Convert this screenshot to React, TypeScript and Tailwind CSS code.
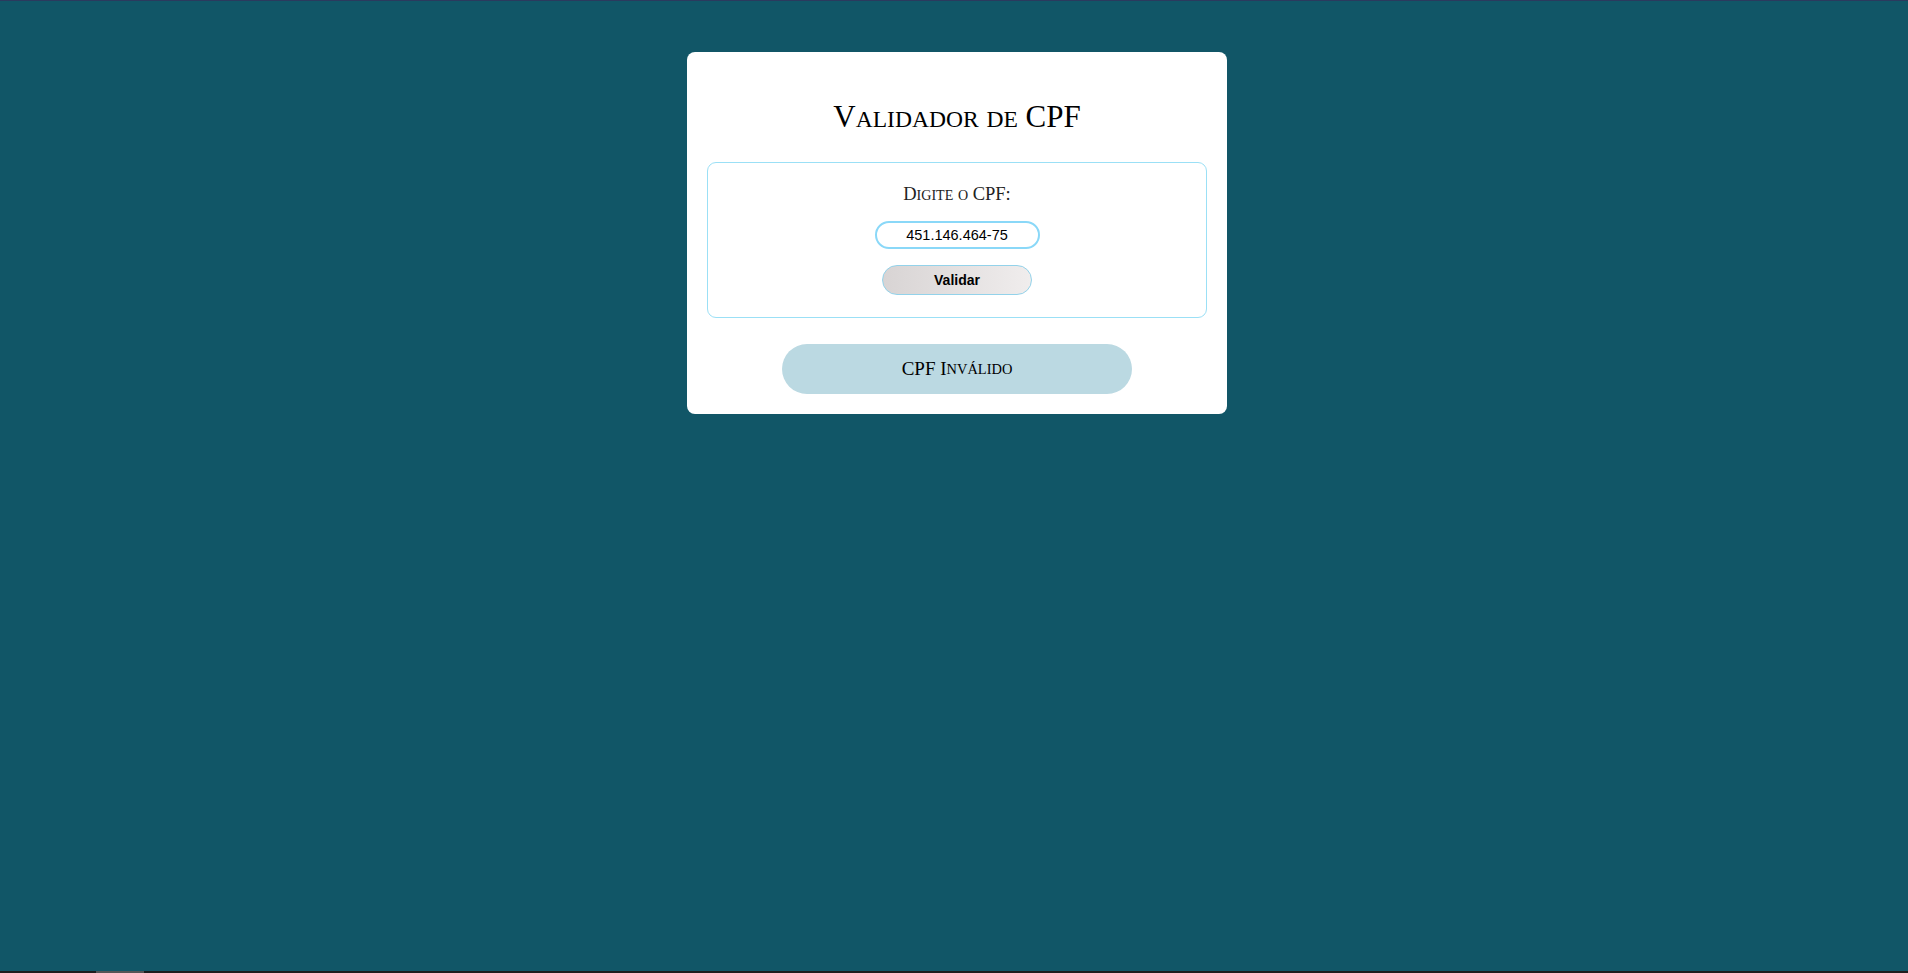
import { useState } from "react";

const serif = { fontFamily: '"Liberation Serif", "DejaVu Serif", serif' };
const sans = { fontFamily: '"Liberation Sans", Arial, sans-serif' };

// small caps with taller lowercase letters than the browser's synthetic ones
function SmallCaps({ text }: { text: string }) {
  const parts = text.match(/[a-zà-ú]+|[^a-zà-ú]+/g) || [];
  return (
    <>
      {parts.map((p, i) =>
        /[a-zà-ú]/.test(p) ? (
          <span key={i} className="uppercase text-[0.76em] leading-none">
            {p}
          </span>
        ) : (
          <span key={i}>{p}</span>
        )
      )}
    </>
  );
}

export default function App() {
  const [cpf, setCpf] = useState("451.146.464-75");

  return (
    <div className="min-h-screen flex flex-col bg-[#115667]">
      <div className="h-px bg-[#2b3a5e]" />

      <main className="flex-1 flex justify-center pt-[51px] pl-[6px]">
        <div className="w-[540px] h-[362px] bg-white rounded-[8px] p-5 flex flex-col items-center">
          <h1 style={serif} className="mt-[25px] h-[40px] text-[31px] leading-[40px] text-black">
            <SmallCaps text="Validador de CPF" />
          </h1>

          <div className="mt-[25px] w-full h-[157px] border border-[#9be0f6] rounded-[9px] flex flex-col items-center pt-[19px]">
            <label style={serif} className="block h-[24px] text-[18.5px] leading-[24px] text-[#222]">
              <SmallCaps text="Digite o CPF:" />
            </label>
            <input
              value={cpf}
              onChange={(e) => setCpf(e.target.value)}
              style={sans}
              className="mt-[15px] w-[165px] h-[28px] rounded-full border-2 border-[#8ad8f8] bg-white text-center text-[14.5px] text-black outline-none"
            />
            <button
              style={sans}
              className="mt-4 w-[150px] h-[30px] rounded-full border border-[#93d2ea] bg-gradient-to-r from-[#d8d4d4] to-[#f0eded] text-[14px] font-bold text-black"
            >
              Validar
            </button>
          </div>

          <div
            style={serif}
            className="mt-[26px] w-[350px] h-[50px] rounded-full bg-[#bbd9e2] flex items-center justify-center text-[19px] text-black"
          >
            <SmallCaps text="CPF Inválido" />
          </div>
        </div>
      </main>

      <div className="h-[2px] bg-[#1e1e1e] flex">
        <div className="ml-[96px] w-[48px] bg-[#555]" />
      </div>
    </div>
  );
}
